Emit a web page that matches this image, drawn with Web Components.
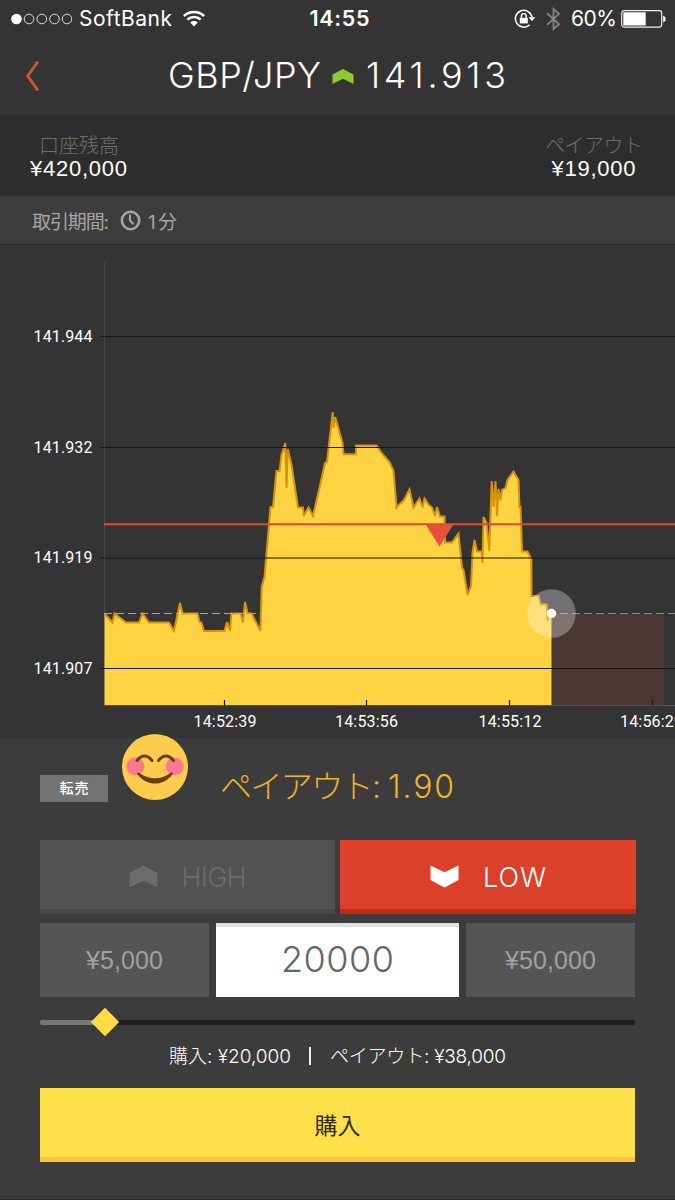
<!DOCTYPE html>
<html lang="ja">
<head>
<meta charset="utf-8">
<title>GBP/JPY</title>
<style>
html,body{margin:0;background:#343434}
body{width:675px;height:1200px;overflow:hidden;font-family:Inter,"Noto Sans CJK JP",sans-serif;color:#fff}
</style>
</head>
<body>
<trade-app></trade-app>
<script>
function define(name, html, setup) {
  const t = document.createElement('template');
  t.innerHTML = html;
  customElements.define(name, class extends HTMLElement {
    connectedCallback() {
      if (this.shadowRoot) return;
      this.attachShadow({mode: 'open'}).append(t.content.cloneNode(true));
      if (setup) setup(this, this.shadowRoot);
    }
  });
}

/* A single line of text tracked so that it spans the width in its "w" attribute. */
define('fit-text', `<style>
:host{display:inline-block;white-space:nowrap;line-height:1;flex:none}
span{display:inline-block;white-space:pre}
</style><span><slot></slot></span>`, (el, root) => {
  const w = +el.getAttribute('w'), span = root.querySelector('span');
  const n = el.textContent.length, natural = span.getBoundingClientRect().width;
  const gap = (w - natural) / (n - 1);
  el.style.width = w + 'px';
  span.style.letterSpacing = gap + 'px';
  span.style.marginRight = -gap + 'px';
});

define('status-bar', `<style>
:host{display:grid;grid-template-columns:1fr auto 1fr;align-items:center;height:37px;color:#fff;font-size:21px}
div{display:flex;align-items:center}
.l{padding-left:11px}.l fit-text{margin:0 11px 0 7px}
.c{font-weight:600;padding-left:4px;font-size:21.5px}
.r{justify-content:flex-end;padding-right:10px}
svg{display:block;flex:none}
</style>
<div class="l"><svg width="61" height="12" viewBox="0 0 61 12"><circle cx="5.5" cy="6" r="5.3" fill="#fff"/><g fill="none" stroke="#ddd"><circle cx="18" cy="6" r="4.8"/><circle cx="30.8" cy="6" r="4.8"/><circle cx="43.5" cy="6" r="4.8"/><circle cx="56" cy="6" r="4.8"/></g></svg>
<fit-text w="93">SoftBank</fit-text>
<svg width="22" height="17" viewBox="0 0 22 17"><g fill="none" stroke="#fff" stroke-width="2.5"><path d="M.9 6A14.5 14.5 0 0 1 21.1 6"/><path d="M4.4 9.7a9.4 9.4 0 0 1 13.2 0"/></g><path d="M7.2 12.4a5.6 5.6 0 0 1 7.6 0L11 16.4z" fill="#fff"/></svg></div>
<div class="c"><fit-text w="60">14:55</fit-text></div>
<div class="r"><svg width="22" height="20" viewBox="0 0 22 20" style="margin-right:10px"><path d="M15.7 15.7A8.4 8.4 0 1 1 18 8" fill="none" stroke="#fff" stroke-width="1.5"/><path d="M14.5 8.2h6.8L18 12.3z" fill="#fff"/><rect x="5.8" y="8.8" width="8" height="5.6" fill="#fff"/><path d="M7.4 9V7a2.4 2.4 0 0 1 4.8 0v2" fill="none" stroke="#fff" stroke-width="1.4"/></svg>
<svg width="15" height="24" viewBox="0 0 15 24" style="margin-right:10px"><path d="M1 6.2 13 17.3 7.5 22V2L13 6.8 1 17.8" fill="none" stroke="#858585" stroke-width="1.8"/></svg>
<fit-text w="46">60%</fit-text>
<svg width="45" height="18" viewBox="0 0 45 18" style="margin-left:4px;margin-right:-1px"><rect x=".7" y=".7" width="40" height="16.4" rx="2.5" fill="none" stroke="#eee" stroke-width="1.2"/><path d="M2.3 2.3h22.4v13.2H2.3z" fill="#fff"/><path d="M42.2 5.5q2.6 1 2.6 3.5t-2.6 3.5z" fill="#fff"/></svg></div>`);

define('pair-header', `<style>
:host{display:flex;align-items:center;height:78px;font-size:36px;font-weight:300;color:#fff}
.back{margin:0 0 0 25px}.pair{margin-left:128px}.up{margin:1px 12px 0 11px}
fit-text{padding-bottom:2px}
svg{display:block;flex:none}
</style>
<svg class="back" width="15" height="32" viewBox="0 0 15 32"><path d="M13 1.5 2.7 16 13 30.5" fill="none" stroke="#c95636" stroke-width="3"/></svg>
<fit-text class="pair" w="153">GBP/JPY</fit-text>
<svg class="up" width="22" height="17" viewBox="0 0 22 17"><path d="M.5 6.5 11 1l10.500 5.500V16L11 10.800.5 16z" fill="#8fc931"/></svg>
<fit-text w="140">141.913</fit-text>`);

define('balance-item', `<style>
:host{display:flex;flex-direction:column;align-items:center;color:#fff}
.k{color:#6f6f6f;font:300 20px/24px "Noto Sans CJK JP",sans-serif;padding-left:1px}
.v{font:400 22px/22px "Liberation Sans",Arial,sans-serif;padding-top:1px}
</style><div class="k"><slot name="label"></slot></div><div class="v"><slot></slot></div>`);

define('balance-bar', `<style>
:host{display:flex;justify-content:space-between;align-items:flex-start;box-sizing:border-box;height:81px;padding:18px 32px 0 30px;background:#2d2d2d}
</style>
<balance-item><fit-text slot="label" w="80">口座残高</fit-text><fit-text w="97">¥420,000</fit-text></balance-item>
<balance-item><fit-text slot="label" w="98">ペイアウト</fit-text><fit-text w="84">¥19,000</fit-text></balance-item>`);

define('period-bar', `<style>
:host{display:flex;align-items:center;box-sizing:border-box;height:49px;padding-left:32px;background:#3d3d3d;border-bottom:1px solid #222;color:#a6a6a6;font:19px Inter,"Noto Sans CJK JP",sans-serif}
.j{padding-top:4px}svg{margin:0 7px 0 11px}
</style>
<fit-text class="j" w="77">取引期間:</fit-text>
<svg width="21" height="21" viewBox="0 0 21 21"><g fill="none" stroke="#a6a6a6"><circle cx="10.500" cy="10.500" r="8.700" stroke-width="2.600"/><path d="M10 4.500v6l3.600 3.700" stroke-width="2"/></g></svg>
<fit-text class="j" w="29">1分</fit-text>`);

define('price-chart', `<style>
:host{display:block;height:493px;background:#343434}
svg{display:block}
text{font-family:Roboto,sans-serif;font-size:16px;fill:#fff}
</style>
<svg width="675" height="493" viewBox="0 245 675 493">
<path d="M104.500 262V705" stroke="#494949"/>
<path d="M552 614H664V705H552z" fill="#4b3733"/>
<path d="M104 613.500H675" stroke="#8d8987" stroke-dasharray="8 4"/>
<path class="area" fill="#ffd342"/>
<path class="line" fill="none" stroke="#d8930c" stroke-width="2" stroke-linejoin="miter" stroke-miterlimit="3"/>
<path d="M104 613.500H551" stroke="#fff" stroke-opacity=".22" stroke-dasharray="8 4"/>
<path d="M104 705.500H675" stroke="#555"/>
<g stroke="#171717" stroke-width="1.200"><path d="M100 336.500H675M100 447.500H675M100 558H675M100 668.500H675"/><path d="M224.500 700v5.500M366.500 700v5.500M509.500 700v5.500M652.500 700v5.500"/></g>
<path d="M104 524.300H675" stroke="#e04a32" stroke-width="2"/>
<path d="M426 525h27l-13.500 21.500z" fill="#e9503a"/>
<circle cx="551.500" cy="613.500" r="24.300" fill="#fff" fill-opacity=".3"/><circle cx="551.500" cy="613.500" r="4.700" fill="#fff"/>
<g class="y"><text x="33.500" y="342" textLength="59">141.944</text><text x="33.500" y="452.500" textLength="59">141.932</text><text x="33.500" y="563" textLength="59">141.919</text><text x="33.500" y="674" textLength="59">141.907</text></g>
<g class="x"><text x="193.500" y="727" textLength="63">14:52:39</text><text x="335" y="727" textLength="63">14:53:56</text><text x="478.500" y="727" textLength="63">14:55:12</text><text x="620" y="727" textLength="63">14:56:29</text></g>
</svg>`, (el, root) => {
  const p = '104.5,613.5 112.5,622.5 114.5,613.5 126,622.5 139,622.5 142.5,613.5 149,622.5 169,622.5 174,631 180,603 182.5,613.5 197.500,613.500 199.500,622 201.500,622.500 204,631 224.500,631 227,622 230,631 231.500,613.500 240.500,613.500 243,622.500 245,602 247.500,613.500 251.500,613.500 260.500,631 261.700,587 264.500,577 270.500,507 273,507 276.500,471 279.500,471 281.500,455 285.300,443 286.500,488 287.800,449 291.500,465 298,507.500 303,507.500 303.700,516 308.500,507.500 313,516 319,490 325,463 327,462 332.700,412 333.400,428 335.200,417 342.500,443 343.500,454.300 356,454.300 356,445.500 376.500,445.500 381.500,453 389.500,462 393.500,471 396.500,507.500 404,500 409.500,489.500 413.500,507.500 419.500,498.500 422.500,507.500 424.500,498.500 429,505 432,507.500 435,516 437,507 440,516.500 444.500,516.500 445,542.500 452,542.500 458.500,533.500 462,568 463.500,570 467.500,595 471,586 472.500,553 474.500,540 477,551.500 481.500,551.500 482.500,563 483.500,517 486.500,523 489.300,551 491.700,481 493.500,507 495.500,481 497,516 498.500,489 500.500,500 502,490 505.500,488 507.500,480 513.500,471.500 518.500,480 519.500,507 520.500,507 522,551.500 527.500,551.500 531.300,559 531.500,596 538.500,596 540.500,604.500 546.500,604.500 547.700,621 549,613.500 551.500,613.500';
  root.querySelector('.line').setAttribute('d', 'M' + p.replaceAll(' ', 'L'));
  root.querySelector('.area').setAttribute('d', 'M104.5,705L' + p.replaceAll(' ', 'L') + 'V705z');
});

define('smile-face', `<style>:host{display:block;flex:none}svg{display:block}</style>
<svg width="66" height="66" viewBox="0 0 66 66"><circle cx="33" cy="33" r="33" fill="#ffcc4d"/><circle cx="13.300" cy="32.500" r="9" fill="#ff7892"/><circle cx="52.700" cy="32.500" r="9" fill="#ff7892"/><g fill="none" stroke="#664006" stroke-width="3" stroke-linecap="round"><path d="M15 26.500q7.500-9 15 0M36.500 26.500q7.500-9 15 0"/></g><path d="M16.200 38.200q16.800 12 33.600 0 1.500.2.700 2C46 46.500 39.500 49.500 33 49.500S20 46.500 15.500 40.200q-.7-1.800.7-2z" fill="#664006"/></svg>`);

define('payout-row', `<style>
:host{display:flex;align-items:flex-start;height:102px;color:#f1b328;font-size:32px}
.sell{width:68px;height:27px;margin:37px 14px 0 0;background:#737373;color:#fff;display:flex;align-items:center;justify-content:center;font:500 14px/1 "Noto Sans CJK JP",sans-serif}
.sell fit-text{padding-bottom:3px}
smile-face{margin-top:-4px}
.p{display:flex;margin:33px 0 0 32px;font-weight:300}
.p fit-text + fit-text{margin-left:7px}
</style><div class="sell"><fit-text w="29">転売</fit-text></div><smile-face></smile-face><div class="p"><fit-text w="161">ペイアウト:</fit-text><fit-text w="66">1.90</fit-text></div>`);

define('side-button', `<style>
:host{display:flex;align-items:center;justify-content:center;box-sizing:border-box;height:74px;gap:24px;background:#525252;border-bottom:5px solid #474747;color:#6c6c6c;font-size:27px;font-weight:300;padding-top:4px}
:host([low]){background:#db412a;border-color:#c22812;color:#fff}
:host([low]) svg{transform:scaleY(-1)}
svg{display:block;margin-top:0}
::slotted(fit-text){padding-top:2px}
</style><svg width="29" height="23" viewBox="0 0 29 23"><path d="M.5 8 14.500.500l14 7.500V22.500L14.500 15.800.500 22.500z" fill="currentColor"/></svg><slot></slot>`);

define('order-panel', `<style>
:host{display:block;box-sizing:border-box;height:462px;padding:0 40px 0 40px;background:#3c3c3c;border-bottom:1px solid #2c2c2c;margin:0}
.sides{display:grid;grid-template-columns:295px 295px;gap:6px;width:596px}
.sides side-button:last-child{margin-left:-1px}
.amounts{display:grid;grid-template-columns:169px 243px 169px;gap:7px;margin-top:9px}
.amounts div{display:flex;align-items:center;justify-content:center;box-sizing:border-box;height:74px;background:#555;color:#a0a0a4;font:25px "Liberation Sans",Arial,sans-serif}
.amounts .in{background:#fff;border-top:4px solid #e1e1e1;color:#666;font:300 36px Inter,sans-serif;padding-bottom:6px}
.track{position:relative;height:5px;margin:23px 0 0;border-radius:2px;background:linear-gradient(to right,#777 65px,#1d1d1d 65px)}
.track i{position:absolute;left:54.5px;top:-8px;width:20px;height:20px;background:#ffdc45;transform:rotate(45deg)}
.sum{display:flex;align-items:center;justify-content:center;height:26px;margin-top:18px;font-size:19px;font-weight:300;color:#fff}
.sum b{width:2px;height:18px;background:#eee;margin:0 19px 0 18px}
.buy{display:flex;align-items:center;justify-content:center;box-sizing:border-box;height:74px;margin-top:19px;background:#ffe04a;border-bottom:5px solid #ffc43c;color:#33290c;font-size:23px;padding-top:8px}
</style>
<payout-row></payout-row>
<div class="sides"><side-button><fit-text w="65">HIGH</fit-text></side-button><side-button low><fit-text w="63">LOW</fit-text></side-button></div>
<div class="amounts"><div><fit-text w="77">¥5,000</fit-text></div><div class="in"><fit-text w="113">20000</fit-text></div><div><fit-text w="91">¥50,000</fit-text></div></div>
<div class="track"><i></i></div>
<div class="sum"><fit-text w="122">購入: ¥20,000</fit-text><b></b><fit-text w="176">ペイアウト: ¥38,000</fit-text></div>
<div class="buy"><fit-text w="46">購入</fit-text></div>`);

define('trade-app', `<style>
:host{display:block;width:675px;height:1200px;overflow:hidden;background:#343434}
</style>
<status-bar></status-bar><pair-header></pair-header><balance-bar></balance-bar><period-bar></period-bar><price-chart></price-chart><order-panel></order-panel>`);
</script>
</body>
</html>
